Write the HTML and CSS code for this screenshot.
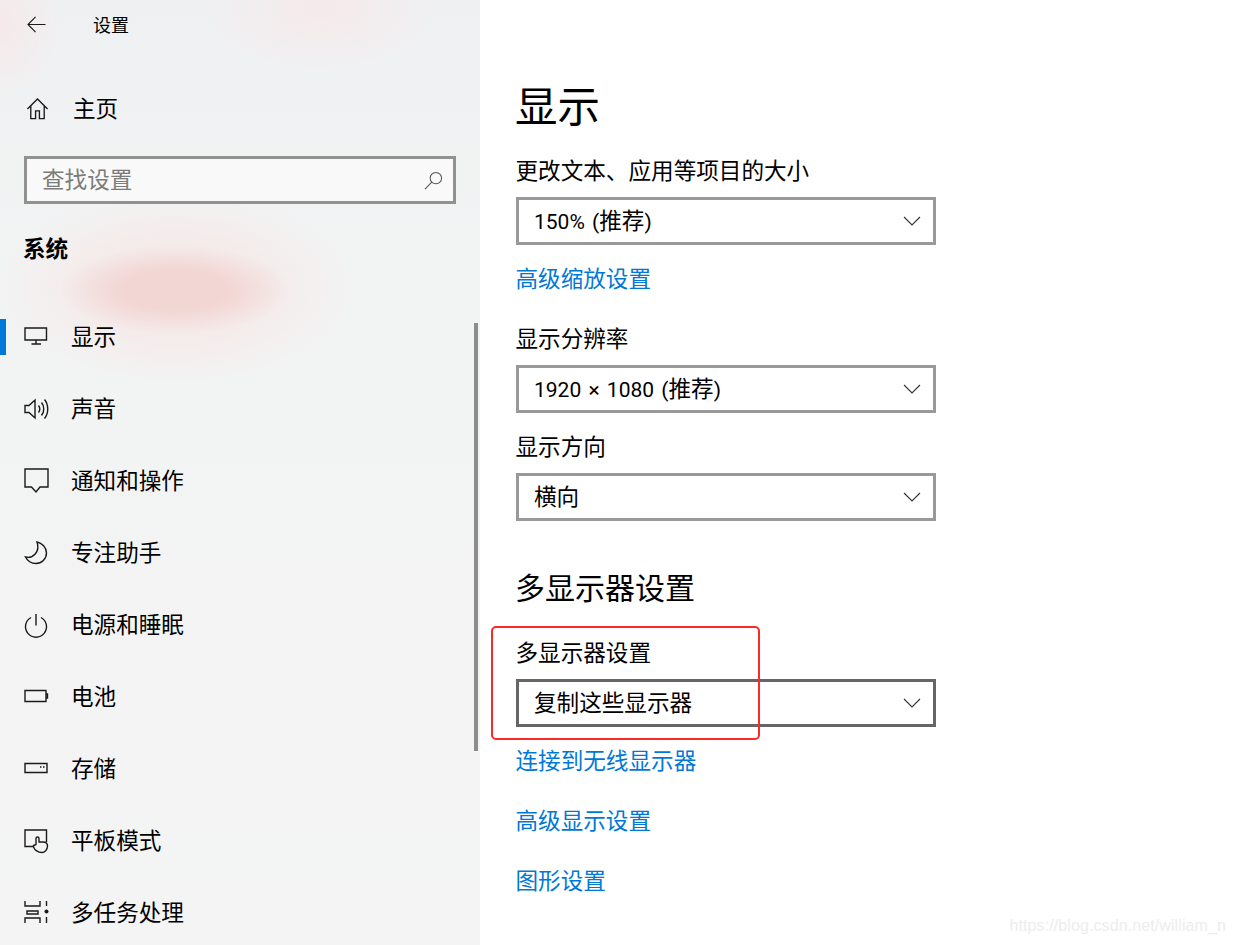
FILE: index.html
```html
<!DOCTYPE html>
<html>

<head>
  <meta charset="UTF-8">
  <title>设置</title>
  <link rel="stylesheet" href="styles.css">
</head>

<body>
  <div class="sidebar">
    <div class="header">
      <svg class="back-icon" viewBox="0 0 20 18"><path d="M19.500 9H1M9 1 1 9l8 8"/></svg>
      <span class="header-title">设置</span>
    </div>

    <div class="home">
      <svg class="icon" viewBox="0 0 24 24"><path d="M1.500 12.500 12 2l10.500 10.500M5 9.500V22.500h5v-8h4v8h5V9.500"/></svg>
      <span class="home-text">主页</span>
    </div>

    <div class="search">
      <span class="search-text">查找设置</span>
      <svg class="search-icon" viewBox="0 0 20 20"><circle cx="12.500" cy="7.500" r="6"/><path d="M8.200 11.800 1 19"/></svg>
    </div>

    <div class="group-title">系统</div>

    <div class="nav-item active">
      <svg class="icon" viewBox="0 0 24 24"><path d="M1 3h21.500v12H1zM12 15v4M7.500 19h9.500"/></svg>
      <span class="nav-text">显示</span>
    </div>
    <div class="nav-item">
      <svg class="icon" viewBox="0 0 24 24"><path d="M1 8.500h4L11 3v18l-6-5.500H1zM14.500 8.500c1.500 2 1.500 5 0 7M17.500 5.500c3 3.500 3 9.500 0 13M20.500 2.500c4.300 5 4.300 14 0 19"/></svg>
      <span class="nav-text">声音</span>
    </div>
    <div class="nav-item">
      <svg class="icon" viewBox="0 0 24 24"><path d="M1 0h23v18h-8l-4 5-4.500-5H1z"/></svg>
      <span class="nav-text">通知和操作</span>
    </div>
    <div class="nav-item">
      <svg class="icon" viewBox="0 0 24 24"><path d="M13 1c5 1 9.500 5.500 9.500 11 0 6-5 10.500-10.500 10.500-5 0-8.500-2.500-10.500-6.500 7 2 15-5 11.500-15z"/></svg>
      <span class="nav-text">专注助手</span>
    </div>
    <div class="nav-item">
      <svg class="icon" viewBox="0 0 24 24"><path d="M12 1v11.500M7 4.500a10.500 10.500 0 1 0 10 0"/></svg>
      <span class="nav-text">电源和睡眠</span>
    </div>
    <div class="nav-item">
      <svg class="icon" viewBox="0 0 24 24"><path d="M1 5.500h21v11H1zM22 9h1.500v4H22"/></svg>
      <span class="nav-text">电池</span>
    </div>
    <div class="nav-item">
      <svg class="icon" viewBox="0 0 24 24"><path d="M1 6.500h22v9H1zM16 10h1.500M19 10h1.500"/></svg>
      <span class="nav-text">存储</span>
    </div>
    <div class="nav-item">
      <svg class="icon" viewBox="0 0 24 24"><path d="M9 17.500H1V1h21.500v12M13 22c-2-1-3.500-3-3.500-5.500l2.500-1V9.500a1.500 1.500 0 0 1 3 0V13h4c3.500 0 4.500 2 4.500 4 0 4-3 6.500-5.500 6.500-2 0-4-.5-5-1.500z"/></svg>
      <span class="nav-text">平板模式</span>
    </div>
    <div class="nav-item">
      <svg class="icon" viewBox="0 0 24 24"><path d="M1 0v5h15V0M1 22v-5h15v5M3 10h11v3H3zM22.500 0v5M22.500 16v6"/><circle class="dot" cx="22.500" cy="10.500" r="2"/></svg>
      <span class="nav-text">多任务处理</span>
    </div>

    <div class="scrollbar"></div>
  </div>

  <div class="content">
    <h1>显示</h1>

    <div class="label label-first">更改文本、应用等项目的大小</div>
    <div class="select">
      <span class="select-text"><span class="latin">150% (</span>推荐<span class="latin">)</span></span>
      <svg class="chevron" viewBox="0 0 18 10"><path d="M1 1l8 8 8-8"/></svg>
    </div>
    <a class="link link-first">高级缩放设置</a>

    <div class="label label-gap">显示分辨率</div>
    <div class="select">
      <span class="select-text"><span class="latin">1920 × 1080 (</span>推荐<span class="latin">)</span></span>
      <svg class="chevron" viewBox="0 0 18 10"><path d="M1 1l8 8 8-8"/></svg>
    </div>

    <div class="label label-tight">显示方向</div>
    <div class="select">
      <span class="select-text">横向</span>
      <svg class="chevron" viewBox="0 0 18 10"><path d="M1 1l8 8 8-8"/></svg>
    </div>

    <h2>多显示器设置</h2>

    <div class="label label-section">多显示器设置</div>
    <div class="select select-hover">
      <span class="select-text">复制这些显示器</span>
      <svg class="chevron" viewBox="0 0 18 10"><path d="M1 1l8 8 8-8"/></svg>
    </div>
    <a class="link link-first">连接到无线显示器</a>
    <a class="link">高级显示设置</a>
    <a class="link">图形设置</a>
  </div>

  <div class="red-box"></div>
  <div class="watermark">https://blog.csdn.net/william_n</div>
</body>
</html>
```

FILE: styles.css
```css
html, body {
  height: 100%;
}

body {
  margin: 0;
  display: flex;
  height: 945px;
  overflow: hidden;
  position: relative;
  background-color: #fff;
  color: #000;
  font-family: Roboto, "Noto Sans CJK SC", sans-serif;
  font-size: 22.6px;
}

svg {
  display: block;
  flex-shrink: 0;
  fill: none;
  stroke: #1a1a1a;
  stroke-width: 1.4;
  overflow: visible;
}

/* sidebar */

.sidebar {
  position: relative;
  width: 480px;
  height: 945px;
  flex-shrink: 0;
  background-color: #f3f3f3;
  background-image:
    radial-gradient(ellipse 115px 44px at 175px 290px, #f2d6d3 0%, #f2d6d3 45%, rgba(242, 216, 213, 0) 100%),
    radial-gradient(ellipse 175px 95px at 175px 288px, rgba(246, 230, 228, .9) 0%, rgba(246, 230, 228, .6) 50%, rgba(246, 230, 228, 0) 100%),
    radial-gradient(ellipse 110px 60px at 320px 10px, rgba(247, 232, 232, .8) 0%, rgba(247, 232, 232, 0) 100%),
    radial-gradient(ellipse 60px 70px at 0 25px, rgba(247, 232, 232, .9) 0%, rgba(247, 232, 232, 0) 100%),
    linear-gradient(180deg, #eff0f2 0%, #f2f3f3 25%, #f4f4f4 100%);
}

.header {
  display: flex;
  align-items: center;
  height: 50px;
  padding-left: 27px;
}

.back-icon {
  width: 19px;
  height: 17px;
  margin-top: -2px;
  stroke-width: 1.2;
}

.header-title {
  margin: -2px 0 0 47px;
  font-size: 18px;
}

.home {
  display: flex;
  align-items: center;
  gap: 24px;
  height: 48px;
  margin-top: 34px;
  padding-left: 26px;
}

.home .icon {
  width: 23px;
  height: 23px;
}

.home-text {
  margin-top: -1px;
}

.nav-text {
  margin-top: -3px;
}

.search {
  display: flex;
  align-items: center;
  justify-content: space-between;
  box-sizing: border-box;
  width: 432px;
  height: 48px;
  margin: 24px 0 0 24px;
  padding: 0 10px 0 15px;
  border: 3px solid #919191;
  background-color: rgba(255, 255, 255, .55);
  color: #7b7b7b;
}

.search-text {
  margin-top: -4px;
}

.search-icon {
  width: 19px;
  height: 19px;
  stroke: #555;
  stroke-width: 1.1;
}

.group-title {
  height: 40px;
  margin: 25px 0 32px 23px;
  line-height: 42px;
  font-weight: bold;
}

.nav-item {
  position: relative;
  display: flex;
  align-items: center;
  gap: 23px;
  height: 72px;
  padding-left: 24px;
}

.nav-item.active::before {
  content: "";
  position: absolute;
  left: 0;
  top: 18px;
  width: 6px;
  height: 36px;
  background-color: #0078d7;
}

.icon {
  width: 24px;
  height: 24px;
}

.dot {
  fill: #1a1a1a;
  stroke: none;
}

.scrollbar {
  position: absolute;
  left: 474px;
  top: 323px;
  width: 4px;
  height: 428px;
  background-color: #8c8c8c;
}

/* main column */

.content {
  display: flex;
  flex-direction: column;
  align-items: flex-start;
  padding-left: 36px;
}

h1 {
  height: 60px;
  margin: 76px 0 0 -1px;
  line-height: 64px;
  font-size: 42.5px;
  font-weight: normal;
}

h2 {
  height: 44px;
  margin: 46px 0 0 -1px;
  line-height: 44px;
  font-size: 30px;
  font-weight: normal;
}

.label {
  height: 32px;
  margin-left: -.5px;
  line-height: 34px;
}

.label-first {
  margin-top: 19px;
}

.label-gap {
  margin-top: 28px;
}

.label-tight {
  margin-top: 18px;
}

.label-section {
  margin-top: 26px;
}

.select {
  display: flex;
  align-items: center;
  justify-content: space-between;
  box-sizing: border-box;
  width: 420px;
  height: 48px;
  margin-top: 10px;
  padding: 0 12px 0 15px;
  border: 3px solid #999;
}

.select-text {
  margin-top: -3px;
}

.latin {
  font-size: 21px;
  word-spacing: 2px;
}

.select-hover {
  border-color: #666;
}

.chevron {
  width: 18px;
  height: 10px;
  stroke: #333;
  stroke-width: 1.1;
}

.link {
  height: 32px;
  margin: 28px 0 0 -.5px;
  line-height: 34px;
  color: #0078d7;
}

.link-first {
  margin-top: 18px;
}

/* annotation on top of the screenshot */

.red-box {
  position: absolute;
  left: 491px;
  top: 626px;
  box-sizing: border-box;
  width: 269px;
  height: 114px;
  border: 2px solid #fb2a24;
  border-radius: 5px;
}

.watermark {
  position: absolute;
  right: 8px;
  top: 917px;
  color: #ededed;
  font-family: "Liberation Sans", sans-serif;
  font-size: 16px;
  letter-spacing: .1px;
}
```
